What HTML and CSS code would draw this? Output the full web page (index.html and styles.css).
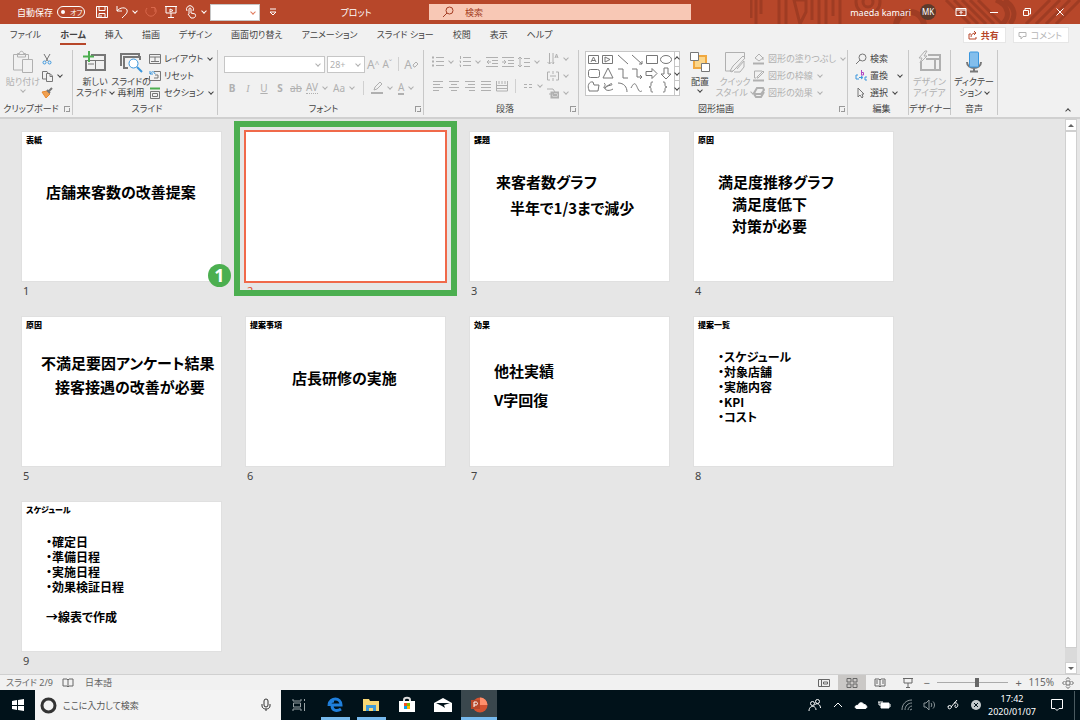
FILE: index.html
```html
<!DOCTYPE html>
<html lang="ja">
<head>
  <meta charset="UTF-8" />
  <meta name="viewport" content="width=device-width, initial-scale=1" />
  <title>プロット</title>
  <link rel="stylesheet" href="styles.css">
</head>
<body>

<!-- タイトルバー -->
<header class="titlebar">
  <svg class="titlebar-art" width="330" height="24" viewBox="0 0 330 24">
    <path d="M1 0v18M6 0v24M11 0v14M29 0v24M36 0v24M62 0v20M69 0v24M76 0v24M83 0v16M90 0v24" />
    <path d="M44 0h12v12l-6 12z" />
    <circle cx="118" cy="2" r="12" /><circle cx="118" cy="2" r="5" />
    <circle cx="160" cy="26" r="14" stroke-width="6" />
    <path d="M196 0l24 24M204 0l24 24M212 0l24 24M220 0l24 24M228 0l24 24" />
    <path d="M246 0c14 6 14 18 6 24M254 0c12 7 12 17 6 24" stroke-width="5" />
    <path d="M300 0l-24 24M310 0l-24 24M320 0l-24 24M330 0l-24 24" />
  </svg>
  <div class="title-left">
    <label class="autosave">自動保存
      <input type="checkbox" class="switch-input">
      <span class="switch">オフ</span>
    </label>
    <button class="qa" aria-label="保存"><svg width="14" height="14" viewBox="0 0 14 14"><path d="M1.500 1.500h11v11h-11zM4 1.500v4h6v-4M4 12.500V8.500h6v4M6 12V10" /></svg></button>
    <button class="qa qa-drop" aria-label="元に戻す"><svg width="14" height="14" viewBox="0 0 14 14"><path d="M2 1v5h5M2 6c3-4 9-4 10-1 1 3-2 5-5 8" /></svg><i class="chev"></i></button>
    <button class="qa qa-off" aria-label="やり直し"><svg width="14" height="14" viewBox="0 0 14 14"><path d="M3 3a5 5 0 1 0 8 0M11 7V2.500H7" /></svg></button>
    <button class="qa" aria-label="スライドショー"><svg width="14" height="14" viewBox="0 0 14 14"><path d="M1 1.500h12M2 2v6h10V2M7 8v4M4 12.500h6M6 4l3 1.500L6 7z" /></svg></button>
    <button class="qa qa-drop" aria-label="タッチ"><svg width="14" height="14" viewBox="0 0 14 14"><path d="M5 9V4a1 1 0 0 1 2 0v4l4 1c1 0 1 4-2 4H7L4 9M3 6a3.500 3.500 0 1 1 6 0" /></svg><i class="chev"></i></button>
    <span class="combo qa-combo"><select aria-label="スタイル"><option></option></select><i class="chev"></i></span>
    <button class="qa" aria-label="ユーザー設定"><svg width="8" height="8" viewBox="0 0 8 8"><path d="M1 1h6M1 4l3 3 3-3z" /></svg></button>
    <h1 class="doc-title">プロット</h1>
  </div>
  <label class="search">
    <svg width="12" height="12" viewBox="0 0 12 12"><circle cx="7.500" cy="4.500" r="3.500" /><path d="M5 7l-4 4" /></svg>
    <input type="text" placeholder="検索" aria-label="検索">
  </label>
  <div class="title-right">
    <span class="user">maeda kamari</span>
    <span class="avatar">MK</span>
    <button class="win" aria-label="リボンの表示オプション"><svg width="12" height="10" viewBox="0 0 12 10"><path d="M1 1.500h10v7H1zM1 3h10M6 7.500V4.500M4.500 6L6 4.500 7.500 6" /></svg></button>
    <button class="win" aria-label="最小化"><svg width="10" height="10" viewBox="0 0 10 10"><path d="M1 5.500h8" /></svg></button>
    <button class="win" aria-label="元に戻す (縮小)"><svg width="10" height="10" viewBox="0 0 10 10"><path d="M1.500 3.500h5v5h-5zM3 3V1.500h5.500V7H7" /></svg></button>
    <button class="win" aria-label="閉じる"><svg width="10" height="10" viewBox="0 0 10 10"><path d="M1.500 1.500l7 7M8.500 1.500l-7 7" /></svg></button>
  </div>
</header>

<!-- タブ -->
<nav class="tabs">
  <a href="#">ファイル</a>
  <a href="#" class="active">ホーム</a>
  <a href="#">挿入</a>
  <a href="#">描画</a>
  <a href="#">デザイン</a>
  <a href="#">画面切り替え</a>
  <a href="#">アニメーション</a>
  <a href="#">スライド ショー</a>
  <a href="#">校閲</a>
  <a href="#">表示</a>
  <a href="#">ヘルプ</a>
  <div class="tab-actions">
    <button class="share"><svg width="9" height="9" viewBox="0 0 9 9"><path d="M3 3H1v5h7V6M3 6c0-3 2-4 5-4M6 0l2 2-2 2" /></svg>共有</button>
    <button class="comment"><svg width="9" height="9" viewBox="0 0 9 9"><path d="M1 1.500h7v4H5L3 8V5.500H1z" /></svg>コメント</button>
  </div>
</nav>

<!-- リボン -->
<section class="ribbon">
  <div class="group g-clip">
    <div class="group-body">
      <button class="big off">
        <svg width="22" height="24" viewBox="0 0 22 24"><path d="M10 20H1.500V4.500h15V9M5.500 7V3.500h2c0-3 4-3 4 0h2V7z" /><path d="M10.500 9.500h10v13h-10z" /></svg>
        <span>貼り付け</span><i class="chev"></i>
      </button>
      <div class="stack">
        <button class="row" aria-label="切り取り"><svg width="12" height="12" viewBox="0 0 12 12"><path d="M3 1l4 7M9 1L5 8" /><g class="blue"><circle cx="3.500" cy="9.500" r="1.500" /><circle cx="8.500" cy="9.500" r="1.500" /></g></svg></button>
        <button class="row" aria-label="コピー"><svg width="12" height="12" viewBox="0 0 12 12"><path d="M5 9H1.500V1.500H6L7 3M5.500 3.500H9l2.500 2.500v5.500h-6zM9 4v2.500h2" /></svg><i class="chev"></i></button>
        <button class="row" aria-label="書式のコピー"><svg width="12" height="12" viewBox="0 0 12 12"><path d="M1 5l5-1 3 3-4 4z" fill="#f0a050" stroke="#e88a30" /><path d="M6 3l3 3M8 4l3-3" stroke-width="2" /></svg></button>
      </div>
    </div>
    <div class="group-label">クリップボード<button class="launcher" aria-label="クリップボードの詳細"></button></div>
  </div>

  <div class="group g-slides">
    <div class="group-body">
      <button class="big">
        <svg width="24" height="22" viewBox="0 0 24 22"><g stroke-width="2"><path d="M8 4h14v15H3V9" /></g><path d="M3 9.500h19M12.500 9.500V19M5 13h6" /><path d="M6 0v11M0 5.500h11" stroke="#4caf50" stroke-width="2" /></svg>
        <span>新しい<br>スライド<i class="chev"></i></span>
      </button>
      <button class="big">
        <svg width="24" height="22" viewBox="0 0 24 22"><g stroke-width="2"><path d="M2 15V3h18v3M9 17H5V6h16v3" /></g><g class="blue"><circle cx="14.500" cy="12.500" r="4.500" fill="#fff" /><path d="M18 16l5 5" stroke-width="2" /></g></svg>
        <span>スライドの<br>再利用</span>
      </button>
      <div class="stack">
        <button class="row"><svg width="12" height="12" viewBox="0 0 12 12"><path d="M.5 1.500h11v9H.5zM.5 4h11M6 4v4M2 8.500h8" /></svg>レイアウト<i class="chev"></i></button>
        <button class="row"><svg width="12" height="12" viewBox="0 0 12 12"><path d="M5 1.500h6.500v9H.5V6M6 5h3v3H5" /><path class="blue" d="M1 1v3h3M1 4c2-3 4-3 5 0" /></svg>リセット</button>
        <button class="row"><svg width="12" height="12" viewBox="0 0 12 12"><path d="M1 1.500h10" stroke="#4caf50" stroke-width="2" /><path d="M1.500 4.500h9v7h-9zM3.500 6.500h5v3h-5z" /></svg>セクション<i class="chev"></i></button>
      </div>
    </div>
    <div class="group-label">スライド</div>
  </div>

  <div class="group g-font off">
    <div class="group-body rows">
      <div class="line">
        <span class="combo font-name"><select aria-label="フォント"><option></option></select><i class="chev"></i></span>
        <span class="combo font-size"><select aria-label="フォント サイズ"><option>28+</option></select><i class="chev"></i></span>
        <button class="glyph large">A<sup>^</sup></button>
        <button class="glyph">A<sup>ˇ</sup></button>
        <i class="bar"></i>
        <button class="glyph large" aria-label="書式のクリア">A<svg width="7" height="7" viewBox="0 0 7 7"><path d="M1 4l3-3 2 2-3 3H2z" /></svg></button>
      </div>
      <div class="line line-text">
        <button class="glyph"><b>B</b></button>
        <button class="glyph serif"><em>I</em></button>
        <button class="glyph"><u>U</u></button>
        <button class="glyph"><b>S</b></button>
        <button class="glyph"><s>ab</s></button>
        <button class="glyph"><span class="spacing">AV</span><i class="chev"></i></button>
        <button class="glyph">Aa<i class="chev"></i></button>
        <i class="bar"></i>
        <button class="glyph" aria-label="蛍光ペン"><svg width="12" height="14" viewBox="0 0 12 14"><path d="M3 9l1-3 5-5 2 2-5 5z" /><path d="M0 12h12" stroke-width="2" /></svg><i class="chev"></i></button>
        <button class="glyph"><span class="ink">A</span><i class="chev"></i></button>
      </div>
    </div>
    <div class="group-label">フォント<button class="launcher" aria-label="フォントの詳細"></button></div>
  </div>

  <div class="group g-para off">
    <div class="group-body">
      <div class="rows">
        <div class="line">
          <button class="glyph" aria-label="箇条書き"><svg width="12" height="12" viewBox="0 0 12 12"><path d="M0 1.500h2M0 5.500h2M0 9.500h2" stroke-width="2" /><path d="M4 1.500h8M4 5.500h8M4 9.500h8" /></svg><i class="chev"></i></button>
          <button class="glyph" aria-label="段落番号"><svg width="12" height="12" viewBox="0 0 12 12"><path d="M1.500 0v3M.5 5h1v2M.5 9h1v2M4 1.500h8M4 5.500h8M4 9.500h8" /></svg><i class="chev"></i></button>
          <button class="glyph" aria-label="インデントを減らす"><svg width="12" height="12" viewBox="0 0 12 12"><path d="M0 1.500h12M6 4.500h6M6 7.500h6M0 10.500h12M5 6H1M3 4L1 6l2 2" /></svg></button>
          <button class="glyph" aria-label="インデントを増やす"><svg width="12" height="12" viewBox="0 0 12 12"><path d="M0 1.500h12M6 4.500h6M6 7.500h6M0 10.500h12M0 6h4M2 4l2 2-2 2" /></svg></button>
          <button class="glyph" aria-label="行間"><svg width="12" height="12" viewBox="0 0 12 12"><path d="M2 1v10M0 3l2-2 2 2M0 9l2 2 2-2M6 2.500h6M6 6.500h6M6 10.500h6" /></svg><i class="chev"></i></button>
        </div>
        <div class="line">
          <button class="glyph" aria-label="左揃え"><svg width="12" height="12" viewBox="0 0 12 12"><path d="M1 1.500h10M1 4.500h7M1 7.500h10M1 10.500h6" /></svg></button>
          <button class="glyph" aria-label="中央揃え"><svg width="12" height="12" viewBox="0 0 12 12"><path d="M1 1.500h10M3 4.500h6M1 7.500h10M3 10.500h6" /></svg></button>
          <button class="glyph" aria-label="右揃え"><svg width="12" height="12" viewBox="0 0 12 12"><path d="M1 1.500h10M4 4.500h7M1 7.500h10M5 10.500h6" /></svg></button>
          <button class="glyph" aria-label="両端揃え"><svg width="12" height="12" viewBox="0 0 12 12"><path d="M1 1.500h10M1 4.500h10M1 7.500h10M1 10.500h10" /></svg></button>
          <button class="glyph" aria-label="均等割り付け"><svg width="12" height="12" viewBox="0 0 12 12"><path d="M.5 1v10h11V1M3 1v3M6 1v3M9 1v3M1 5.500h10M1 8.500h10" /></svg></button>
          <i class="bar"></i>
          <button class="glyph" aria-label="段組み"><svg width="10" height="12" viewBox="0 0 10 12"><path d="M1 4.500h3M6 4.500h3M1 7.500h3M6 7.500h3" /></svg><i class="chev"></i></button>
        </div>
      </div>
      <div class="stack">
        <button class="row" aria-label="文字列の方向"><svg width="12" height="12" viewBox="0 0 12 12"><path d="M2.500 0v11M.5 9l2 2 2-2M6 0v11M7 9l-1 2M8 5l1.500-4L11 5M8.500 4h2" /></svg><i class="chev"></i></button>
        <button class="row" aria-label="文字の配置"><svg width="12" height="12" viewBox="0 0 12 12"><path d="M3 2H.5v8H3M9 2h2.500v8H9M6 1v3M6 8v3M3 6h6" /></svg><i class="chev"></i></button>
        <button class="row" aria-label="SmartArt に変換"><svg width="12" height="12" viewBox="0 0 12 12"><path d="M0 2h6l2 3-2 2H2" /><path d="M4.500 5.500h7v5h-7zM6 8h4" stroke-width="2" /></svg><i class="chev"></i></button>
      </div>
    </div>
    <div class="group-label">段落<button class="launcher" aria-label="段落の詳細"></button></div>
  </div>

  <div class="group g-draw">
    <div class="group-body">
      <div class="gallery">
        <svg width="88" height="42" viewBox="0 0 88 42">
          <path d="M2.500 3.500h10v8h-10zM5 10l2.500-5L10 10M6 8.500h3M16.500 3.500h10v8h-10zM19 5l5 2.500-5 2.500zM32 3l10 9M46 3l10 9M56 9v3h-3M60.500 3.500h11v8h-11z" />
          <ellipse cx="80" cy="7.500" rx="5.500" ry="4" />
          <rect x="2.500" y="17.500" width="11" height="8" rx="2" />
          <path d="M22 16l5 10H17zM32 17h5v9h5M46 17h5v8h5M54 23l2 2-2 2M60 19.500h6v-3l5 5-5 5v-3h-6zM78 16v6h-3l5 5 5-5h-3v-6z" />
          <path d="M3 38c-2-4 0-9 4-8l1 3h5l-1 6H3zM18 31c3 2-1 4 0 5s7-6 8-4-7 1-7 4 5 3 8 1M32 31c6 0 9 4 9 9M45 36c4-8 5-3 7 1s3 2 4 2M67 30c-2 0-2 0-2 2s0 3-2 3c2 0 2 1 2 3s0 2 2 2M77 30c2 0 2 0 2 2s0 3 2 3c-2 0-2 1-2 3s0 2-2 2" />
        </svg>
        <div class="gallery-nav">
          <button aria-label="前の行"><i class="chev up"></i></button>
          <button aria-label="次の行"><i class="chev"></i></button>
          <button aria-label="図形一覧"><i class="chev"></i></button>
        </div>
      </div>
      <button class="big">
        <svg width="22" height="22" viewBox="0 0 22 22"><path d="M5 5h12v12H5z" fill="#fbd68b" stroke="#f0a840" stroke-width="2" /><path d="M1.500 1.500h8v8h-8zM12.500 12.500h8v8h-8z" fill="#fff" /></svg>
        <span>配置</span><i class="chev"></i>
      </button>
      <button class="big off">
        <svg width="24" height="22" viewBox="0 0 24 22"><path d="M10 20H2.500V1.500h19V7M7 20l3-5 10-10 2 2-9 10-4 4zM14 18l7-8v6l-4 5h-6" /></svg>
        <span>クイック<br>スタイル<i class="chev"></i></span>
      </button>
      <div class="stack off">
        <button class="row"><svg width="12" height="12" viewBox="0 0 12 12"><path d="M2 5l4-4 4 4-4 3zM10 4v3" /><path d="M0 10.500h11" stroke-width="2" /></svg>図形の塗りつぶし<i class="chev"></i></button>
        <button class="row"><svg width="12" height="12" viewBox="0 0 12 12"><path d="M9 1H1.500v7H3M4 7l6-6 1 1-6 6H4z" /><path d="M0 10.500h11" stroke-width="2" /></svg>図形の枠線<i class="chev"></i></button>
        <button class="row"><svg width="12" height="12" viewBox="0 0 12 12"><path d="M1 6l3-5h6l1 2-3 4H2zM1 7l2 3h5l3-5" stroke-width="2" /></svg>図形の効果<i class="chev"></i></button>
      </div>
    </div>
    <div class="group-label">図形描画<button class="launcher" aria-label="図形描画の詳細"></button></div>
  </div>

  <div class="group g-edit">
    <div class="group-body">
      <div class="stack">
        <button class="row"><svg width="12" height="12" viewBox="0 0 12 12"><circle cx="7.500" cy="4.500" r="3.500" /><path d="M5 7l-4 4" /></svg>検索</button>
        <button class="row wide"><svg width="12" height="12" viewBox="0 0 12 12"><path d="M6.500 0v5M6 2.500h2.500v2.500H6" stroke="#b146c2" /><path class="blue" d="M3 5H1v4h3M4 7.500h3M6 6l2 1.500L6 9M12 7h-2v3h2" /></svg>置換<i class="chev"></i></button>
        <button class="row"><svg width="12" height="12" viewBox="0 0 12 12"><path d="M3 1v9l2-2 2 3 1-1-1-3h2z" /></svg>選択<i class="chev"></i></button>
      </div>
    </div>
    <div class="group-label">編集</div>
  </div>

  <div class="group g-designer">
    <div class="group-body">
      <button class="big off">
        <svg width="24" height="22" viewBox="0 0 24 22"><path d="M10 4h12v15H3v-8M8 8h14M17 8v11" stroke-width="2" /><path d="M7 0L1 7h3l-2 5 7-7H6l3-5z" fill="#f1f1f1" /></svg>
        <span>デザイン<br>アイデア</span>
      </button>
    </div>
    <div class="group-label">デザイナー</div>
  </div>

  <div class="group g-voice">
    <div class="group-body">
      <button class="big">
        <svg width="18" height="22" viewBox="0 0 18 22"><path d="M2 11c0 8 14 8 14 0M9 17v4M5 20.500h8" stroke-width="2" /><rect x="4.500" y="1" width="9" height="15" rx="1" fill="#83beec" stroke="#3a96dd" /></svg>
        <span>ディクテー<br>ション<i class="chev"></i></span>
      </button>
    </div>
    <div class="group-label">音声</div>
  </div>
  <button class="collapse" aria-label="リボンを折りたたむ"><i class="chev up"></i></button>
</section>

<!-- スライド一覧 -->
<main class="workspace">
  <ol class="slides">
    <li>
      <article class="slide"><h2>表紙</h2><p class="cover">店舗来客数の改善提案</p></article>
      <span class="num">1</span>
    </li>
    <li class="selected">
      <article class="slide"></article>
      <span class="num">2</span>
      <div class="marker"><span class="marker-num">1</span></div>
    </li>
    <li>
      <article class="slide"><h2>課題</h2><p class="issue">来客者数グラフ<br><span class="indent">半年で1/3まで減少</span></p></article>
      <span class="num">3</span>
    </li>
    <li>
      <article class="slide"><h2>原因</h2><p class="cause">満足度推移グラフ<br><span class="indent">満足度低下</span><br><span class="indent">対策が必要</span></p></article>
      <span class="num">4</span>
    </li>
    <li>
      <article class="slide"><h2>原因</h2><p class="survey">不満足要因アンケート結果<br><span class="indent">接客接遇の改善が必要</span></p></article>
      <span class="num">5</span>
    </li>
    <li>
      <article class="slide"><h2>提案事項</h2><p class="proposal">店長研修の実施</p></article>
      <span class="num">6</span>
    </li>
    <li>
      <article class="slide"><h2>効果</h2><p class="effect">他社実績<br>V字回復</p></article>
      <span class="num">7</span>
    </li>
    <li>
      <article class="slide"><h2>提案一覧</h2><p class="list">・スケジュール<br>・対象店舗<br>・実施内容<br>・KPI<br>・コスト</p></article>
      <span class="num">8</span>
    </li>
    <li>
      <article class="slide"><h2>スケジュール</h2><p class="list">・確定日<br>・準備日程<br>・実施日程<br>・効果検証日程<br><br>→線表で作成</p></article>
      <span class="num">9</span>
    </li>
  </ol>
  <div class="scrollbar">
    <button aria-label="上へ"><i class="tri up"></i></button>
    <div class="thumb"></div>
    <button aria-label="下へ"><i class="tri"></i></button>
  </div>
</main>

<!-- ステータスバー -->
<footer class="status">
  <span>スライド 2/9</span>
  <svg class="proof" width="12" height="10" viewBox="0 0 12 10"><path d="M1 1h4l1 1 1-1h4v7H7L6 9 5 8H1zM6 2v6" /></svg>
  <span>日本語</span>
  <div class="views">
    <button aria-label="標準"><svg width="12" height="10" viewBox="0 0 12 10"><path d="M.5 1.500h11v7H.5zM3.500 1.500v7M5.500 4h4v2h-4z" /></svg></button>
    <button aria-label="スライド一覧" class="on"><svg width="12" height="10" viewBox="0 0 12 10"><path d="M1 .5h4v3.500H1zM7 .5h4v3.500H7zM1 6h4v3.500H1zM7 6h4v3.500H7z" /></svg></button>
    <button aria-label="閲覧表示"><svg width="12" height="10" viewBox="0 0 12 10"><path d="M1 1h4l1 1 1-1h4v7H7L6 9 5 8H1zM6 2v6M2 3h2M2 5h2M8 3h2M8 5h2" /></svg></button>
    <button aria-label="スライドショー"><svg width="12" height="10" viewBox="0 0 12 10"><path d="M1 .5h10M2 1v4h8V1M6 5v4M4 9.500h4" /></svg></button>
  </div>
  <button class="zoom-btn" aria-label="縮小">−</button>
  <input type="range" class="zoom" min="0" max="100" value="58" aria-label="ズーム">
  <button class="zoom-btn" aria-label="拡大">+</button>
  <span class="percent">115%</span>
  <button class="fit" aria-label="ウィンドウに合わせる"><svg width="12" height="12" viewBox="0 0 12 12"><path d="M4 4h4v4H4zM4 2.500L6 .5l2 2M4 9.500l2 2 2-2M2.500 4L.5 6l2 2M9.500 4l2 2-2 2" /></svg></button>
</footer>

<!-- タスクバー -->
<footer class="taskbar">
  <button class="start" aria-label="スタート"><svg width="12" height="12" viewBox="0 0 12 12"><path d="M0 2l5-1v5H0zM6 1l6-1v6H6zM0 7h5v4l-5-1zM6 7h6v5l-6-1z" /></svg></button>
  <label class="cortana">
    <svg width="17" height="17" viewBox="0 0 17 17"><circle cx="8.500" cy="8.500" r="6.500" stroke-width="3" /></svg>
    <input type="text" placeholder="ここに入力して検索" aria-label="ここに入力して検索">
    <svg width="10" height="14" viewBox="0 0 10 14"><rect x="3" y="1" width="4" height="8" rx="2" /><path d="M1 6v2c0 4 8 4 8 0V6M5 11v2" /></svg>
  </label>
  <button class="app" aria-label="タスク ビュー"><svg width="14" height="12" viewBox="0 0 14 12"><path d="M1 0v2h8V0M1.500 4h7v4h-7zM1 12v-2h8v2M12.500 0v2M12.500 4v8" stroke="#9aa3a6" /></svg></button>
  <button class="app running" aria-label="Edge"><svg width="16" height="16" viewBox="0 0 16 16"><path d="M2 8c1-8 12-8 12 0H5c0 7 6 6 9 4M2 9c0-4 3-5 5-5" stroke="#1f7fdc" stroke-width="3" /></svg></button>
  <button class="app running" aria-label="エクスプローラー"><svg width="16" height="14" viewBox="0 0 16 14"><path d="M0 1h6l1 2h9v10H0z" fill="#f7d774" /><path d="M3 13V7h10v6h-3v-3H6v3z" fill="#3f9bd8" /></svg></button>
  <button class="app" aria-label="ストア"><svg width="18" height="18" viewBox="0 0 18 18"><path d="M6 6V4c0-3 6-3 6 0v2" stroke="#ddd" stroke-width="2" /><path d="M1 5h16v11H1z" fill="#fff" /><path d="M6 7h3v3H6z" fill="#f25022" /><path d="M9 7h3v3H9z" fill="#7fba00" /><path d="M6 10h3v3H6z" fill="#00a4ef" /><path d="M9 10h3v3H9z" fill="#ffb900" /></svg></button>
  <button class="app" aria-label="メール"><svg width="18" height="16" viewBox="0 0 18 16"><path d="M0 6l9-5 9 5v9H0z" fill="#fff" /><path d="M2 6h14l-6 2 1 3-3-2z" fill="#01121a" /></svg></button>
  <button class="app running current" aria-label="PowerPoint"><svg width="18" height="18" viewBox="0 0 18 18"><circle cx="10" cy="9" r="7.500" fill="#d35230" /><path d="M10 1.500A7.500 7.500 0 0 1 17.500 9H10z" fill="#ff8f6b" /><path d="M1 4h9v9H1z" fill="#b7472a" /><path d="M4 11V6h2c2 0 2 3 0 3H4" stroke="#fff" /></svg></button>
  <div class="tray">
    <button aria-label="People"><svg width="14" height="14" viewBox="0 0 14 14"><circle cx="4.500" cy="5.500" r="2" /><circle cx="9.500" cy="3.500" r="2" /><path d="M1 13c0-6 7-6 7-1M6.500 7c3-3 6 0 6 3" /></svg></button>
    <button aria-label="隠れているアイコン"><svg width="10" height="8" viewBox="0 0 10 8"><path d="M1 6l4-4 4 4" /></svg></button>
    <button aria-label="OneDrive"><svg width="14" height="10" viewBox="0 0 14 10"><path d="M3 8.500c-3 0-2-4 1-3 1-4 5-3 6-1 3 0 4 4 1 4z" fill="#fff" /></svg></button>
    <button aria-label="バッテリー"><svg width="14" height="10" viewBox="0 0 14 10"><path d="M4 3h8v5H4z" fill="#fff" /><path d="M1 2h5M2 2v3h2M13 4v3" /></svg></button>
    <button class="dim" aria-label="ネットワーク"><svg width="12" height="12" viewBox="0 0 12 12"><path d="M1 11C1 5 5 1 11 1M4 11c0-4 3-7 7-7M7 11c0-2 2-4 4-4M9 11l2-1" /></svg></button>
    <button class="dim" aria-label="音量"><svg width="14" height="12" viewBox="0 0 14 12"><path d="M1 4h2l3-3v10L3 8H1zM8 4c1 1 1 3 0 4M10 2.500c2 2 2 5 0 7" /></svg></button>
    <button aria-label="ペン"><svg width="12" height="12" viewBox="0 0 12 12"><path d="M4 8L10 1M1 8c0-3 5-1 3 1s-4 0-2-2M7 4c3-1 5 2 3 4s-3-2-1-2" /></svg></button>
    <button aria-label="通知の状態"><svg width="12" height="12" viewBox="0 0 12 12"><circle cx="6" cy="6" r="5" fill="#c4cacc" stroke="none" /><path d="M4 4l4 4M8 4l-4 4" stroke="#01121a" /></svg></button>
    <time class="clock" datetime="2020-01-07T17:42">17:42<br>2020/01/07</time>
    <button class="notice" aria-label="アクション センター"><svg width="14" height="14" viewBox="0 0 14 14"><path d="M1.500 1.500h11v9H9l-2 2-2-2H1.500z" /></svg></button>
  </div>
</footer>

</body>
</html>
```
FILE: styles.css
```css
* {
  box-sizing: border-box;
}
body {
  margin: 0;
  height: 100vh;
  display: flex;
  flex-direction: column;
  font-family: "Noto Sans", "Noto Sans CJK JP", sans-serif;
  font-size: 9px;
  line-height: 11px;
  font-feature-settings: "palt";
  color: #444;
  background: #f1f1f1;
  overflow: hidden;
}
button,
input,
select {
  font: inherit;
  font-feature-settings: inherit;
  color: inherit;
  background: none;
  border: 0;
  padding: 0;
  margin: 0;
}
button {
  display: flex;
  align-items: center;
  justify-content: center;
  white-space: nowrap;
}
svg {
  flex: none;
  fill: none;
  stroke: currentColor;
}

/* 小さな矢印 */
.chev {
  display: inline-block;
  flex: none;
  width: 4px;
  height: 4px;
  border: solid currentColor;
  border-width: 0 1px 1px 0;
  transform: rotate(45deg);
  margin: 0 2px 2px 4px;
}
.chev.up {
  transform: rotate(225deg);
}
.combo {
  display: flex;
  position: relative;
  background: #fff;
  border: 1px solid #c6c6c6;
}
.combo select {
  width: 100%;
  appearance: none;
  padding-left: 2px;
}
.combo .chev {
  position: absolute;
  right: 2px;
  top: 5px;
}

/* タイトルバー */
.titlebar {
  flex: none;
  height: 24px;
  display: flex;
  align-items: center;
  position: relative;
  background: #b7472a;
  color: #fff;
}
.titlebar-art {
  position: absolute;
  right: 0;
  top: 0;
  stroke: #9f3c23;
  stroke-width: 3;
}
.title-left {
  flex: 0 0 429px;
  display: flex;
  align-items: center;
  padding-left: 17px;
}
.autosave {
  display: flex;
  align-items: center;
  gap: 4px;
  margin-right: 7px;
}
.switch-input {
  position: absolute;
  opacity: 0;
}
.switch {
  display: flex;
  align-items: center;
  gap: 5px;
  width: 28px;
  height: 12px;
  padding-left: 3px;
  border: 1px solid #fff;
  border-radius: 6px;
  font-size: 7px;
}
.switch::before {
  content: "";
  width: 4px;
  height: 4px;
  border-radius: 50%;
  background: #fff;
}
.qa {
  width: 20px;
  height: 20px;
}
.qa-drop {
  width: 29px;
}
.qa-off {
  color: #d9684c;
}
.qa-combo {
  width: 50px;
  height: 17px;
  margin-right: 3px;
  color: #e0795c;
}
.doc-title {
  flex: 1;
  margin: 0;
  text-align: center;
  font-size: 9px;
  font-weight: 400;
}
.search {
  flex: 0 1 262px;
  height: 16px;
  display: flex;
  align-items: center;
  gap: 11px;
  padding-left: 13px;
  background: #f8c8b5;
  color: #a33c22;
}
.search input {
  flex: 1;
  min-width: 0;
}
input::placeholder {
  color: inherit;
  opacity: 1;
}
.title-right {
  margin-left: auto;
  display: flex;
  align-items: center;
  position: relative;
  padding-right: 4px;
}
.avatar {
  width: 16px;
  height: 16px;
  margin: 0 8px 0 9px;
  border-radius: 50%;
  background: #5d3a2c;
  font-size: 8px;
  line-height: 16px;
  text-align: center;
}
.win {
  width: 33px;
  height: 24px;
}

/* タブ */
.tabs {
  flex: none;
  height: 22px;
  display: flex;
  align-items: center;
  gap: 19px;
  padding: 0 11px 0 10px;
}
.tabs a {
  color: #444;
  text-decoration: none;
  white-space: nowrap;
  border-bottom: 2px solid transparent;
  padding: 4px 0 3px;
}
.tabs a.active {
  font-weight: 700;
  border-color: #b7472a;
}
.tab-actions {
  margin-left: auto;
  display: flex;
  gap: 7px;
}
.tab-actions button {
  height: 16px;
  padding: 0 6px 0 4px;
  gap: 4px;
  background: #fff;
  border: 1px solid #e6e6e6;
}
.share {
  color: #b7472a;
  font-weight: 700;
}
.tab-actions .comment {
  color: #b5b5b5;
}

/* リボン */
.ribbon {
  flex: none;
  display: flex;
  height: 73px;
  padding-top: 4px;
  border-bottom: 2px solid #d0d0d0;
}
.group {
  display: flex;
  flex-direction: column;
  position: relative;
  height: 65px;
  border-right: 1px solid #c8c8c8;
}
.group-body {
  display: flex;
  flex: 1;
}
.group-label {
  line-height: 12px;
  text-align: center;
  white-space: nowrap;
}
.launcher {
  position: absolute;
  right: 2px;
  bottom: 3px;
  width: 6px;
  height: 6px;
  border: 1px solid #999;
  border-width: 1px 0 0 1px;
}
.launcher::after {
  content: "";
  width: 3px;
  height: 3px;
  border: solid #999;
  border-width: 0 1px 1px 0;
}
.g-clip { width: 73px; padding-left: 2px; }
.g-clip .group-label { padding-right: 12px; }
.g-slides { width: 145px; padding-left: 4px; }
.g-font { width: 206px; padding-left: 6px; }
.g-para { width: 155px; padding-left: 8px; }
.g-draw { width: 269px; padding-left: 6px; }
.g-edit { width: 61px; padding-left: 7px; }
.g-designer { width: 42px; }
.g-voice { width: 47px; }

.ribbon svg {
  color: #777;
}
.off .group-body,
button.off,
.stack.off,
.ribbon .off svg {
  color: #b0b0b0;
}
.big {
  flex-direction: column;
  justify-content: flex-start;
  width: 42px;
  height: 48px;
}
.big > svg {
  height: 24px;
  margin-bottom: 2px;
}
.big > .chev {
  margin: 1px 0 0;
}
.big span .chev {
  margin: 0 0 2px 3px;
}
.g-slides .big,
.g-draw .big {
  width: 36px;
}
.g-designer .big,
.g-voice .big {
  width: 100%;
}
.g-clip .stack {
  margin-left: -3px;
}
.stack {
  display: flex;
  flex-direction: column;
  flex: none;
}
.row {
  height: 17px;
  gap: 3px;
  justify-content: flex-start;
}
.row .chev {
  margin-left: 2px;
}
.wide .chev {
  margin-left: 7px;
}
.blue {
  stroke: #3a96dd;
}
.rows {
  flex-direction: column;
}
.line {
  display: flex;
  align-items: center;
  height: 24px;
  gap: 4px;
}
.g-font .line {
  gap: 2px;
  height: 28px;
}
.g-font .line-text {
  gap: 4px;
  height: 20px;
  padding-left: 2px;
}
.glyph {
  min-width: 12px;
  font-size: 10px;
}
.glyph sup {
  font-size: 8px;
  line-height: 0;
}
.large {
  font-size: 12px;
}
.serif {
  font-family: "Liberation Serif", serif;
}
.spacing {
  border-bottom: 1px dotted currentColor;
}
.ink {
  border-bottom: 2px solid currentColor;
}
.glyph .chev {
  margin-left: 5px;
}
.bar {
  width: 1px;
  height: 14px;
  margin: 0 3px;
  background: #d0d0d0;
}
.font-name {
  width: 101px;
  height: 17px;
}
.font-size {
  width: 38px;
  height: 17px;
}
.g-para .stack {
  margin-left: auto;
  padding-right: 8px;
}
.gallery {
  display: flex;
  width: 100px;
  height: 45px;
  margin: 1px 3px 0 0;
  background: #fff;
  border: 1px solid #c6c6c6;
}
.gallery-nav {
  flex: 1;
  display: grid;
  border-left: 1px solid #c6c6c6;
}
.gallery-nav button + button {
  border-top: 1px solid #c6c6c6;
}
.gallery-nav .chev {
  margin: 0;
}
.collapse {
  align-self: flex-end;
  margin: 0 8px 2px auto;
}

/* スライド一覧 */
.workspace {
  flex: 1;
  min-height: 0;
  display: flex;
  background: #e6e6e6;
}
.slides {
  flex: 1;
  list-style: none;
  margin: 0;
  padding: 13px 0 0 22px;
  display: grid;
  grid-template-columns: repeat(auto-fill, 199px);
  align-content: start;
  gap: 16px 25px;
}
.slides li {
  position: relative;
}
.slide {
  height: 149px;
  padding: 1px 4px;
  background: #fff;
  color: #000;
  outline: 1px solid #e0e0e0;
  font-family: "Noto Sans CJK JP", sans-serif;
}
.slide h2 {
  margin: 0;
  font-size: 8px;
  line-height: 14px;
  font-weight: 900;
}
.slide p {
  margin: 0;
  font-size: 15px;
  line-height: 22px;
  font-weight: 700;
  white-space: nowrap;
}
.slide .indent {
  padding-left: 14px;
}
.slide .cover { padding: 34px 0 0 20px; }
.slide .issue { padding: 22px 0 0 22px; line-height: 26px; }
.slide .cause { padding: 24px 0 0 20px; }
.slide .survey { padding: 19px 0 0 15px; line-height: 24px; }
.slide .proposal { padding: 35px 0 0 42px; }
.slide .effect { padding: 24px 0 0 20px; line-height: 29px; }
.slide .list {
  padding: 17px 0 0 20px;
  font-size: 12px;
  line-height: 15px;
}
.num {
  display: block;
  padding: 3px 0 0 1px;
  font-size: 11px;
  line-height: 14px;
  height: 20px;
}
.selected .slide {
  outline: 2px solid #f0694a;
}
.selected .num {
  color: #e0522f;
}
.marker {
  position: absolute;
  inset: -11px -12px 5px -12px;
  border: 6px solid #4caf50;
}
.marker-num {
  position: absolute;
  left: -32px;
  bottom: 3px;
  width: 23px;
  height: 23px;
  border-radius: 50%;
  background: #4caf50;
  color: #fff;
  font-size: 18px;
  font-weight: 700;
  line-height: 23px;
  text-align: center;
}
.scrollbar {
  width: 12px;
  margin-right: 3px;
  display: flex;
  flex-direction: column;
  background: #dadada;
}
.scrollbar button {
  height: 12px;
  background: #fff;
  border: 1px solid #d0d0d0;
}
.thumb {
  flex: 0 1 517px;
  margin-bottom: auto;
  background: #fff;
  border: 1px solid #d0d0d0;
}
.tri {
  border: 3px solid transparent;
  border-bottom: 0;
  border-top-color: #666;
}
.tri.up {
  transform: rotate(180deg);
}

/* ステータスバー */
.status {
  flex: none;
  height: 16px;
  display: flex;
  align-items: center;
  gap: 13px;
  padding: 0 6px;
  border-top: 1px solid #d0d0d0;
  color: #666;
}
.proof {
  margin: 0 -2px -1px -4px;
}
.views {
  margin: 0 -6px 0 auto;
  display: flex;
}
.views button {
  width: 28px;
  height: 15px;
}
.views .on {
  background: #cac8c6;
}
.zoom-btn {
  width: 6px;
  margin: 0 -6px 0 -5px;
  font-size: 11px;
}
.zoom {
  width: 71px;
  height: 12px;
  appearance: none;
}
.zoom::-webkit-slider-runnable-track {
  height: 1px;
  background: #aaa;
}
.zoom::-webkit-slider-thumb {
  appearance: none;
  width: 4px;
  height: 9px;
  margin-top: -4px;
  background: #666;
}
.percent {
  font-size: 10px;
}
.fit {
  margin-left: -5px;
}

/* タスクバー */
.taskbar {
  flex: none;
  height: 30px;
  display: flex;
  background: #01121a;
  color: #fff;
}
.start {
  width: 35px;
}
.start svg {
  fill: #fff;
  stroke: none;
}
.app svg {
  stroke: none;
}
.cortana {
  width: 246px;
  display: flex;
  align-items: center;
  gap: 6px;
  padding: 0 10px 0 5px;
  background: #f3f3f3;
  color: #333;
}
.cortana input {
  flex: 1;
  min-width: 0;
  color: #555;
}
.app {
  width: 36px;
}
.running {
  background: linear-gradient(#76b9ed, #76b9ed) center bottom / 29px 3px no-repeat;
}
.current {
  background-color: #3a474d;
  background-size: 100% 3px;
}
.tray {
  margin-left: auto;
  display: flex;
  align-items: center;
  padding-right: 5px;
}
.tray button {
  width: 23px;
  height: 29px;
}
.tray .dim {
  color: #8d979b;
}
.clock {
  width: 50px;
  margin-right: 2px;
  line-height: 13px;
  text-align: center;
}
.tray .notice {
  width: 36px;
  border-right: 1px solid #4a5a60;
}
```
